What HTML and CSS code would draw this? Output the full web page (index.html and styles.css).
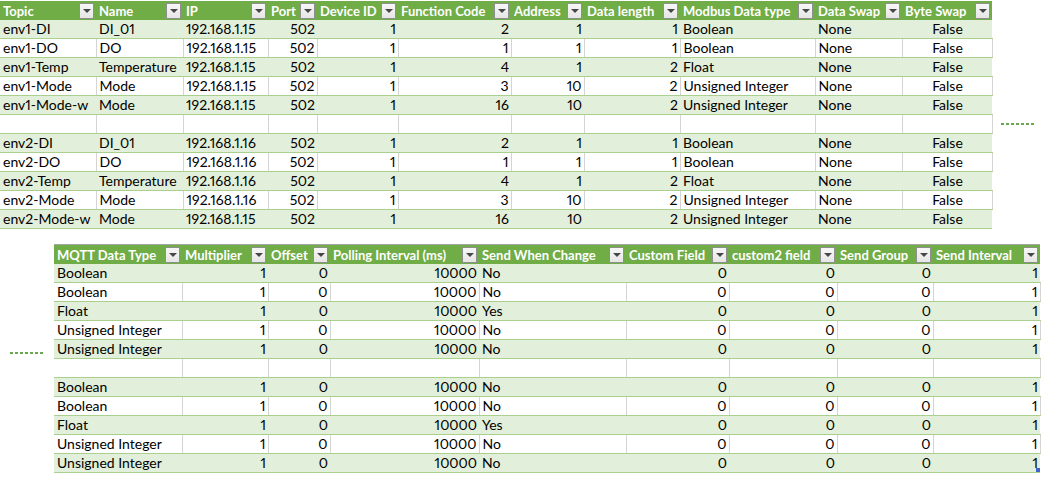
FILE: index.html
```html
<!DOCTYPE html>
<html>
<head>
<meta charset="utf-8">
<link rel="stylesheet" href="styles.css">
</head>
<body>
<div class="section top-section">
  <table class="sheet top">
    <colgroup>
      <col class="t1"><col class="t2"><col class="t3"><col class="t4"><col class="t5"><col class="t6"><col class="t7"><col class="t8"><col class="t9"><col class="t10"><col class="t11">
    </colgroup>
    <thead>
      <tr>
        <th><div class="hd"><span>Topic</span><span class="dd"></span></div></th>
        <th><div class="hd"><span>Name</span><span class="dd"></span></div></th>
        <th><div class="hd"><span>IP</span><span class="dd"></span></div></th>
        <th><div class="hd"><span>Port</span><span class="dd"></span></div></th>
        <th><div class="hd"><span>Device ID</span><span class="dd"></span></div></th>
        <th><div class="hd"><span>Function Code</span><span class="dd"></span></div></th>
        <th><div class="hd"><span>Address</span><span class="dd"></span></div></th>
        <th><div class="hd"><span>Data length</span><span class="dd"></span></div></th>
        <th><div class="hd"><span>Modbus Data type</span><span class="dd"></span></div></th>
        <th><div class="hd"><span>Data Swap</span><span class="dd"></span></div></th>
        <th><div class="hd"><span>Byte Swap</span><span class="dd"></span></div></th>
      </tr>
    </thead>
    <tbody>
      <tr class="g"><td>env1-DI</td><td>DI_01</td><td>192.168.1.15</td><td class="r">502</td><td class="r">1</td><td class="r">2</td><td class="r">1</td><td class="r">1</td><td>Boolean</td><td>None</td><td class="c">False</td></tr>
      <tr class="w"><td>env1-DO</td><td>DO</td><td>192.168.1.15</td><td class="r">502</td><td class="r">1</td><td class="r">1</td><td class="r">1</td><td class="r">1</td><td>Boolean</td><td>None</td><td class="c">False</td></tr>
      <tr class="g"><td>env1-Temp</td><td>Temperature</td><td>192.168.1.15</td><td class="r">502</td><td class="r">1</td><td class="r">4</td><td class="r">1</td><td class="r">2</td><td>Float</td><td>None</td><td class="c">False</td></tr>
      <tr class="w"><td>env1-Mode</td><td>Mode</td><td>192.168.1.15</td><td class="r">502</td><td class="r">1</td><td class="r">3</td><td class="r">10</td><td class="r">2</td><td>Unsigned Integer</td><td>None</td><td class="c">False</td></tr>
      <tr class="g"><td>env1-Mode-w</td><td>Mode</td><td>192.168.1.15</td><td class="r">502</td><td class="r">1</td><td class="r">16</td><td class="r">10</td><td class="r">2</td><td>Unsigned Integer</td><td>None</td><td class="c">False</td></tr>
      <tr class="w"><td></td><td></td><td></td><td></td><td></td><td></td><td></td><td></td><td></td><td></td><td></td></tr>
      <tr class="g"><td>env2-DI</td><td>DI_01</td><td>192.168.1.16</td><td class="r">502</td><td class="r">1</td><td class="r">2</td><td class="r">1</td><td class="r">1</td><td>Boolean</td><td>None</td><td class="c">False</td></tr>
      <tr class="w"><td>env2-DO</td><td>DO</td><td>192.168.1.16</td><td class="r">502</td><td class="r">1</td><td class="r">1</td><td class="r">1</td><td class="r">1</td><td>Boolean</td><td>None</td><td class="c">False</td></tr>
      <tr class="g"><td>env2-Temp</td><td>Temperature</td><td>192.168.1.16</td><td class="r">502</td><td class="r">1</td><td class="r">4</td><td class="r">1</td><td class="r">2</td><td>Float</td><td>None</td><td class="c">False</td></tr>
      <tr class="w"><td>env2-Mode</td><td>Mode</td><td>192.168.1.16</td><td class="r">502</td><td class="r">1</td><td class="r">3</td><td class="r">10</td><td class="r">2</td><td>Unsigned Integer</td><td>None</td><td class="c">False</td></tr>
      <tr class="g"><td>env2-Mode-w</td><td>Mode</td><td>192.168.1.15</td><td class="r">502</td><td class="r">1</td><td class="r">16</td><td class="r">10</td><td class="r">2</td><td>Unsigned Integer</td><td>None</td><td class="c">False</td></tr>
    </tbody>
  </table>
  <div class="dots dots-right"></div>
</div>

<div class="section bottom-section">
  <div class="dots-col"><div class="dots dots-left"></div></div>
  <table class="sheet bottom">
    <colgroup>
      <col class="b1"><col class="b2"><col class="b3"><col class="b4"><col class="b5"><col class="b6"><col class="b7"><col class="b8"><col class="b9">
    </colgroup>
    <thead>
      <tr>
        <th><div class="hd"><span>MQTT Data Type</span><span class="dd"></span></div></th>
        <th><div class="hd"><span>Multiplier</span><span class="dd"></span></div></th>
        <th><div class="hd"><span>Offset</span><span class="dd"></span></div></th>
        <th><div class="hd"><span>Polling Interval (ms)</span><span class="dd"></span></div></th>
        <th><div class="hd"><span>Send When Change</span><span class="dd"></span></div></th>
        <th><div class="hd"><span>Custom Field</span><span class="dd"></span></div></th>
        <th><div class="hd"><span>custom2 field</span><span class="dd"></span></div></th>
        <th><div class="hd"><span>Send Group</span><span class="dd"></span></div></th>
        <th><div class="hd"><span>Send Interval</span><span class="dd"></span></div></th>
      </tr>
    </thead>
    <tbody>
      <tr class="g"><td>Boolean</td><td class="r">1</td><td class="r">0</td><td class="r">10000</td><td>No</td><td class="r">0</td><td class="r">0</td><td class="r">0</td><td class="r">1</td></tr>
      <tr class="w"><td>Boolean</td><td class="r">1</td><td class="r">0</td><td class="r">10000</td><td>No</td><td class="r">0</td><td class="r">0</td><td class="r">0</td><td class="r">1</td></tr>
      <tr class="g"><td>Float</td><td class="r">1</td><td class="r">0</td><td class="r">10000</td><td>Yes</td><td class="r">0</td><td class="r">0</td><td class="r">0</td><td class="r">1</td></tr>
      <tr class="w"><td>Unsigned Integer</td><td class="r">1</td><td class="r">0</td><td class="r">10000</td><td>No</td><td class="r">0</td><td class="r">0</td><td class="r">0</td><td class="r">1</td></tr>
      <tr class="g"><td>Unsigned Integer</td><td class="r">1</td><td class="r">0</td><td class="r">10000</td><td>No</td><td class="r">0</td><td class="r">0</td><td class="r">0</td><td class="r">1</td></tr>
      <tr class="w"><td></td><td></td><td></td><td></td><td></td><td></td><td></td><td></td><td></td></tr>
      <tr class="g"><td>Boolean</td><td class="r">1</td><td class="r">0</td><td class="r">10000</td><td>No</td><td class="r">0</td><td class="r">0</td><td class="r">0</td><td class="r">1</td></tr>
      <tr class="w"><td>Boolean</td><td class="r">1</td><td class="r">0</td><td class="r">10000</td><td>No</td><td class="r">0</td><td class="r">0</td><td class="r">0</td><td class="r">1</td></tr>
      <tr class="g"><td>Float</td><td class="r">1</td><td class="r">0</td><td class="r">10000</td><td>Yes</td><td class="r">0</td><td class="r">0</td><td class="r">0</td><td class="r">1</td></tr>
      <tr class="w"><td>Unsigned Integer</td><td class="r">1</td><td class="r">0</td><td class="r">10000</td><td>No</td><td class="r">0</td><td class="r">0</td><td class="r">0</td><td class="r">1</td></tr>
      <tr class="g"><td>Unsigned Integer</td><td class="r">1</td><td class="r">0</td><td class="r">10000</td><td>No</td><td class="r">0</td><td class="r">0</td><td class="r">0</td><td class="r last">1<span class="handle"></span></td></tr>
    </tbody>
  </table>
</div>
</body>
</html>
```

FILE: styles.css
```css
html, body {
  margin: 0;
  padding: 0;
  background: #ffffff;
}
body {
  width: 1043px;
  height: 477px;
  overflow: hidden;
  font-family: Lato, "Open Sans", "Liberation Sans", sans-serif;
  font-size: 14px;
  font-variant-numeric: proportional-nums;
  color: #000000;
}
.section {
  display: flex;
  align-items: flex-start;
}
.top-section {
  padding-top: 1px;
}
.bottom-section {
  margin-top: 15px;
}
.sheet {
  border-collapse: collapse;
  table-layout: fixed;
}
.sheet.top { width: 992px; }
.sheet.bottom {
  width: 986px;
  border-top: 1px solid #a6a6a6;
}
.t1 { width: 96px; }
.t2 { width: 87px; }
.t3 { width: 85px; }
.t4 { width: 49px; }
.t5 { width: 81px; }
.t6 { width: 113px; }
.t7 { width: 73px; }
.t8 { width: 96px; }
.t9 { width: 135px; }
.t10 { width: 87px; }
.t11 { width: 90px; }
.b1 { width: 128px; }
.b2 { width: 86px; }
.b3 { width: 62px; }
.b4 { width: 149px; }
.b5 { width: 147px; }
.b6 { width: 103px; }
.b7 { width: 108px; }
.b8 { width: 96px; }
.b9 { width: 107px; }

.sheet th {
  background: #70ad47;
  color: #ffffff;
  font-weight: 700;
  font-size: 13px;
  height: 19px;
  padding: 0;
  text-align: left;
  white-space: nowrap;
}
.hd {
  display: flex;
  align-items: center;
  height: 19px;
  padding: 0 2px 0 3px;
  overflow: hidden;
}
.hd span:first-child {
  flex: 1 1 auto;
  white-space: nowrap;
  overflow: hidden;
}
.dd {
  flex: 0 0 auto;
  width: 13px;
  height: 14px;
  margin-left: 2px;
  border: 1px solid #8f8f8f;
  background: linear-gradient(#f7f7f7, #e6e6e6);
  display: flex;
  align-items: center;
  justify-content: center;
}
.dd::after {
  content: "";
  width: 0;
  height: 0;
  border-left: 4px solid transparent;
  border-right: 4px solid transparent;
  border-top: 4px solid #474747;
}
.sheet td {
  height: 18px;
  padding: 0 2px 0 3px;
  border-bottom: 1px solid #a9d08e;
  white-space: nowrap;
  overflow: visible;
  line-height: 18px;
}
.sheet tr.g td {
  background: #e2efda;
}
.sheet tr.w td {
  background: #ffffff;
  border-right: 1px solid #d4d4d4;
}
.sheet td.r { text-align: right; }
.sheet td.c { text-align: center; }
.sheet td.last { position: relative; }
.handle {
  position: absolute;
  right: 0;
  bottom: 0;
  width: 4px;
  height: 4px;
  background: #3f63c7;
}

.dots {
  width: 33px;
  height: 2px;
  background: repeating-linear-gradient(90deg, #6aa84f 0 3px, transparent 3px 5px);
}
.dots-right {
  margin-top: 122px;
  margin-left: 8px;
}
.dots-col {
  width: 54px;
  flex: 0 0 54px;
}
.dots-left {
  margin-top: 108px;
  margin-left: 10px;
}
```
